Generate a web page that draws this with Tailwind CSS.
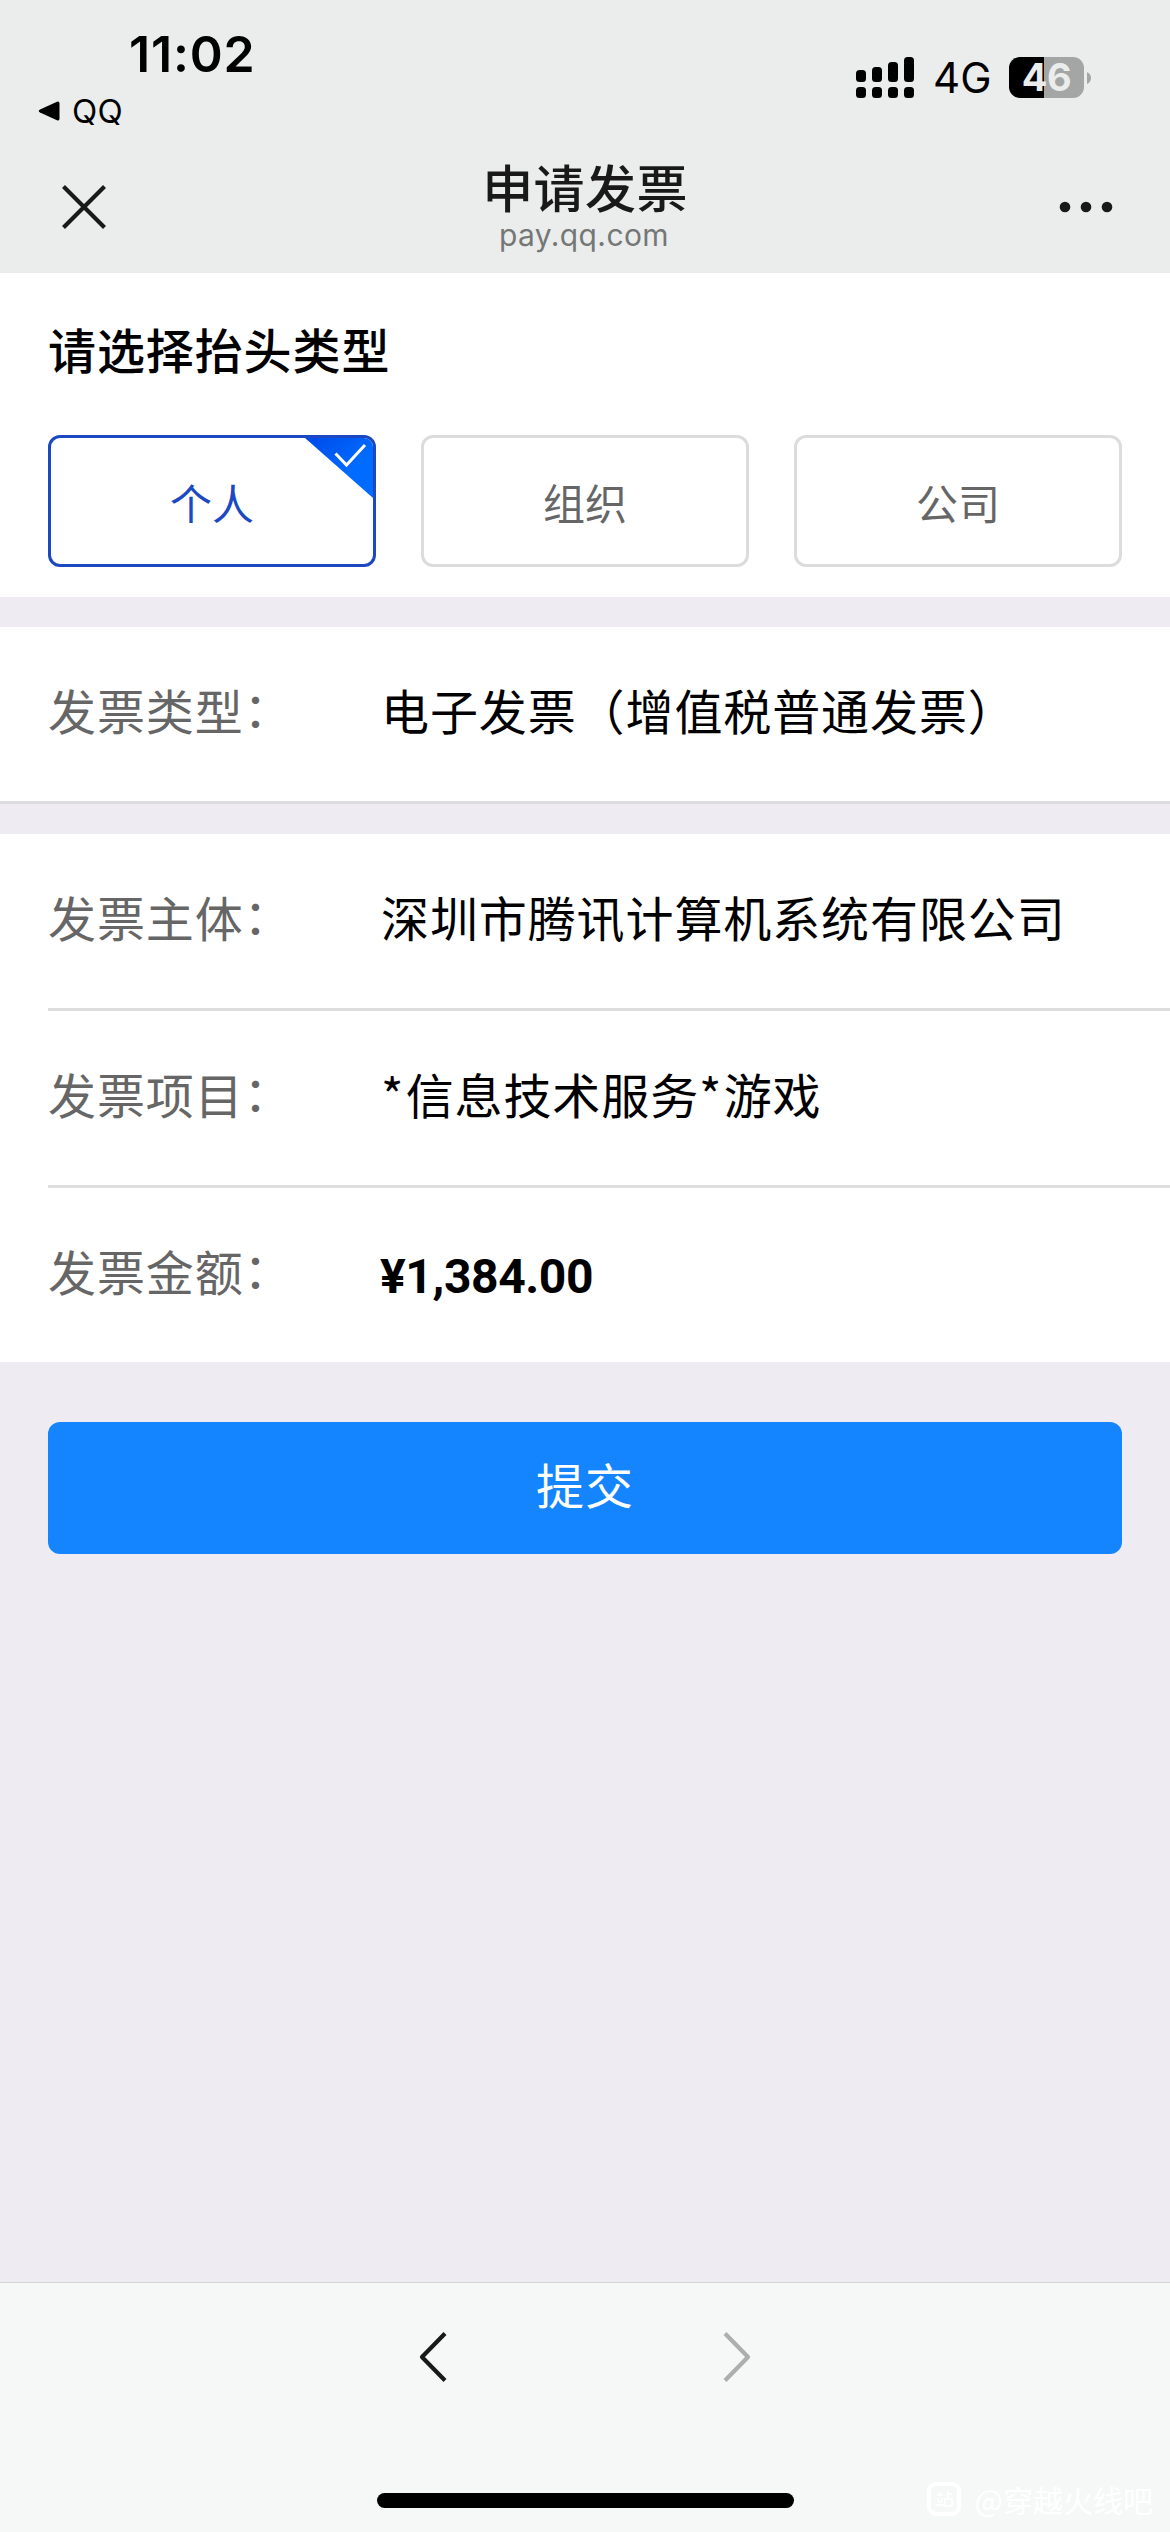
<!DOCTYPE html>
<html lang="zh-CN">
<head>
<meta charset="utf-8">
<title>申请发票</title>
<script src="https://cdn.jsdelivr.net/npm/@tailwindcss/browser@4"></script>
</head>
<body class="w-[1170px] h-[2532px] overflow-hidden bg-[#eeecf2] flex flex-col text-black font-['Noto_Sans_CJK_SC',sans-serif]">

<header class="h-[273px] shrink-0 bg-[#ebedec] flex flex-col">
  <div class="h-[144px] flex justify-between">
    <div class="flex flex-col pl-[38px] pt-[23px] font-[Inter,sans-serif]">
      <div class="pl-[91px] h-[62px] leading-[62px] text-[50px] font-semibold tracking-[0.8px]">11:02</div>
      <div class="flex items-center gap-[12px] h-[52px]">
        <svg class="w-[22px] h-[20px]" viewBox="0 0 22 20"><path d="M2 8.6 19 .8Q21.500 0 21.500 2.500V17.500Q21.500 20 19 19.200L2 11.400Q-.5 10 2 8.600Z"/></svg>
        <span class="text-[33px] leading-[52px] tracking-[0.2px]">QQ</span>
      </div>
    </div>
    <div class="flex h-[41px] mt-[57px] pr-[79px] items-center font-[Inter,sans-serif]">
      <svg class="w-[58px] h-[41px]" viewBox="0 0 58 41">
        <rect x="0" y="13" width="10" height="12" rx="3.500"/><rect x="16" y="10" width="10" height="15" rx="3.500"/><rect x="32" y="5" width="10" height="20" rx="3.500"/><rect x="48" y="0" width="10" height="25" rx="3.500"/>
        <rect x="0" y="30" width="10" height="11" rx="3.500"/><rect x="16" y="30" width="10" height="11" rx="3.500"/><rect x="32" y="30" width="10" height="11" rx="3.500"/><rect x="48" y="30" width="10" height="11" rx="3.500"/>
      </svg>
      <span class="w-[95px] pl-[19px] text-[42px] leading-[41px]">4G</span>
      <div class="w-[75px] h-[41px] rounded-[11px] bg-linear-to-r from-black from-[35px] to-[#a4a6a5] to-[35px] text-[#ebedec] text-[38px] leading-[41px] font-bold text-center tracking-[-0.5px]">46</div>
      <svg class="w-[4px] h-[12px] ml-[3px]" viewBox="0 0 4 12"><path d="M0 0Q4 2 4 6T0 12Z" fill="#a4a6a5"/></svg>
    </div>
  </div>
  <div class="h-[129px] flex justify-between px-[57px]">
    <svg class="w-[54px] h-[54px] mt-[36px]" viewBox="0 0 54 54" fill="none" stroke="#191919" stroke-width="4.200"><path d="M6.500 6.500 47.500 47.500M47.500 6.500 6.500 47.500"/></svg>
    <div class="flex flex-col items-center">
      <div class="h-[66px] mt-[8px] leading-[68px] text-[51px] tracking-[0.4px] font-medium text-[#191919]">申请发票</div>
      <div class="h-[34px] leading-[34px] text-[30px] tracking-[0.4px] text-[#757776] font-[Inter,sans-serif] pr-[2px]">pay.qq.com</div>
    </div>
    <svg class="w-[54px] h-[54px] mt-[36px] overflow-visible" viewBox="0 0 54 54" fill="#191919"><circle cx="6" cy="27" r="5.300"/><circle cx="27" cy="27" r="5.300"/><circle cx="48" cy="27" r="5.300" /></svg>
  </div>
</header>

<section class="h-[324px] shrink-0 bg-white px-[48px] pt-[35px]">
  <h1 class="h-[80px] leading-[80px] text-[48px] tracking-[0.9px] font-medium">请选择抬头类型</h1>
  <div class="mt-[47px] grid grid-cols-3 gap-[45px] text-[42px] leading-[128px] text-center text-[#666]">
    <div class="relative h-[132px] rounded-[12px] border-[3px] border-[#1c49c2] text-[#1c49c2] overflow-hidden">个人
      <svg class="absolute top-0 right-0 w-[68px] h-[60px]" viewBox="0 0 68 60"><defs><linearGradient id="g" x1="0" y1="0" x2="1" y2="1"><stop offset="0" stop-color="#0048e8"/><stop offset=".6" stop-color="#006bff"/></linearGradient></defs><path d="M0 0H68V60Z" fill="url(#g)"/><path d="M30.500 15.500 41.500 27 60 7" fill="none" stroke="#fff" stroke-width="3"/></svg>
    </div>
    <div class="h-[132px] rounded-[12px] border-[3px] border-[#dcdcdc]">组织</div>
    <div class="h-[132px] rounded-[12px] border-[3px] border-[#dcdcdc]">公司</div>
  </div>
</section>

<section class="mt-[30px] h-[177px] shrink-0 bg-white border-b-[3px] border-[#dddde0] flex pl-[48px] text-[48px] leading-[164px] tracking-[0.9px]">
  <div class="w-[333px] flex text-[#666]">发票类型<span class="-mt-[3px]">：</span></div><div>电子发票（增值税普通发票）</div>
</section>

<section class="mt-[30px] h-[528px] shrink-0 bg-white pl-[48px] text-[48px] leading-[164px] tracking-[0.9px]">
  <div class="h-[177px] border-b-[3px] border-[#dedede] flex">
    <div class="w-[333px] flex text-[#666]">发票主体<span class="-mt-[3px]">：</span></div><div>深圳市腾讯计算机系统有限公司</div>
  </div>
  <div class="h-[177px] border-b-[3px] border-[#dedede] flex">
    <div class="w-[333px] flex text-[#666]">发票项目<span class="-mt-[3px]">：</span></div><div><span class="tracking-[2.2px]">*</span>信息技术服务<span class="tracking-[2.2px]">*</span>游戏</div>
  </div>
  <div class="h-[174px] flex">
    <div class="w-[332px] flex text-[#666]">发票金额<span class="-mt-[3px]">：</span></div><div class="font-[Roboto,sans-serif] font-bold leading-[177px] tracking-[-0.4px]">¥1,384.00</div>
  </div>
</section>

<button class="mx-[48px] mt-[60px] h-[132px] shrink-0 rounded-[12px] bg-[#1485fe] text-white text-[48px] leading-[122px] pb-[10px] tracking-[0.9px]">提交</button>

<footer class="relative mt-auto h-[250px] shrink-0 bg-[#f6f8f7] border-t border-[#d3d4d6] flex flex-col items-center">
  <div class="mt-[46px] flex gap-[252px]">
    <svg class="w-[56px] h-[56px]" viewBox="0 0 56 56" fill="none" stroke="#191919" stroke-width="4.200" stroke-linejoin="round"><path d="M42 4.500 19 28 42 51.500"/></svg>
    <svg class="w-[56px] h-[56px]" viewBox="0 0 56 56" fill="none" stroke="#adafae" stroke-width="4.200" stroke-linejoin="round"><path d="M14 4.500 37 28 14 51.500"/></svg>
  </div>
  <div class="mt-[108px] w-[417px] h-[15px] rounded-full bg-black"></div>
  <div class="absolute right-[17px] bottom-[14px] flex items-center gap-[14px] text-white">
    <svg class="w-[34px] h-[34px]" viewBox="0 0 34 34" fill="none" stroke="#fff"><rect x="2" y="2" width="30" height="30" rx="7" stroke-width="4"/><path d="M10 13h6M13 10v3M11 16l1 5M15 16l-1 5M9 23h8M21 9v7M21 12h4M18 17h7v7h-7z" stroke-width="1.500"/></svg>
    <span class="text-[30px] leading-[38px]">@穿越火线吧</span>
  </div>
</footer>
</body>
</html>
